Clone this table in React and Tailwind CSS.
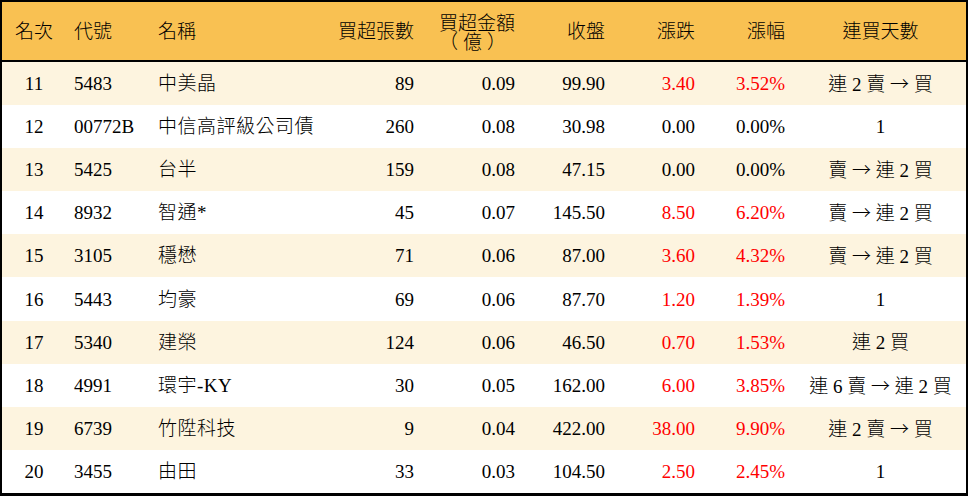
import React from 'react';

const ROWS = [
  { rank: 11, code: '5483', name: '中美晶', vol: 89, amt: '0.09', close: '99.90', chg: '3.40', pct: '3.52%', days: '連 2 賣 → 買' },
  { rank: 12, code: '00772B', name: '中信高評級公司債', vol: 260, amt: '0.08', close: '30.98', chg: '0.00', pct: '0.00%', days: '1' },
  { rank: 13, code: '5425', name: '台半', vol: 159, amt: '0.08', close: '47.15', chg: '0.00', pct: '0.00%', days: '賣 → 連 2 買' },
  { rank: 14, code: '8932', name: '智通*', vol: 45, amt: '0.07', close: '145.50', chg: '8.50', pct: '6.20%', days: '賣 → 連 2 買' },
  { rank: 15, code: '3105', name: '穩懋', vol: 71, amt: '0.06', close: '87.00', chg: '3.60', pct: '4.32%', days: '賣 → 連 2 買' },
  { rank: 16, code: '5443', name: '均豪', vol: 69, amt: '0.06', close: '87.70', chg: '1.20', pct: '1.39%', days: '1' },
  { rank: 17, code: '5340', name: '建榮', vol: 124, amt: '0.06', close: '46.50', chg: '0.70', pct: '1.53%', days: '連 2 買' },
  { rank: 18, code: '4991', name: '環宇-KY', vol: 30, amt: '0.05', close: '162.00', chg: '6.00', pct: '3.85%', days: '連 6 賣 → 連 2 買' },
  { rank: 19, code: '6739', name: '竹陞科技', vol: 9, amt: '0.04', close: '422.00', chg: '38.00', pct: '9.90%', days: '連 2 賣 → 買' },
  { rank: 20, code: '3455', name: '由田', vol: 33, amt: '0.03', close: '104.50', chg: '2.50', pct: '2.45%', days: '1' },
];

// red when the stock moved up, plain black when flat
const moveColor = (v) => (parseFloat(v) > 0 ? 'text-[#ff0000]' : 'text-black');

const COLS = 'grid grid-cols-[64px_84px_186px_88px_101px_90px_90px_90px_171px]';

// the arrow is drawn from the CJK font so it is as wide as in the original
const Days = ({ text }) => {
  const parts = text.split('→');
  return (
    <>
      {parts.map((p, i) => (
        <React.Fragment key={i}>
          {i > 0 && <span style={{ fontFamily: '"Noto Sans CJK TC", sans-serif' }}>→</span>}
          {p}
        </React.Fragment>
      ))}
    </>
  );
};

export default function App() {
  return (
    <div
      className="w-[968px] h-[496px] bg-white text-black text-[19px] leading-none font-light"
      style={{ fontFamily: '"Liberation Serif", "Noto Sans CJK TC", serif' }}
    >
      <div className="h-full border-black border-t-2 border-x-2 border-b-[3px] flex flex-col">
        {/* HEADER */}
        <div className={`${COLS} h-[60px] items-center bg-[#f9c152] border-b-2 border-black`}>
          <div className="text-center">名次</div>
          <div className="pl-[8px]">代號</div>
          <div className="pl-[8px]">名稱</div>
          <div className="text-right pr-[10px]">買超張數</div>
          <div className="text-right pr-[10px] leading-[19px] pt-[3px]">
            <div>買超金額</div>
            <div className="pr-[4px] tracking-[5px]">（億）</div>
          </div>
          <div className="text-right pr-[10px]">收盤</div>
          <div className="text-right pr-[10px]">漲跌</div>
          <div className="text-right pr-[10px]">漲幅</div>
          <div className="text-center">連買天數</div>
        </div>

        {/* ROWS */}
        {ROWS.map((r, i) => (
          <div
            key={r.rank}
            className={`${COLS} flex-1 items-center ${i % 2 === 0 ? 'bg-[#fdf4df]' : 'bg-white'}`}
          >
            <div className="text-center">{r.rank}</div>
            <div className="pl-[8px]">{r.code}</div>
            <div className="pl-[8px] whitespace-nowrap tracking-[0.5px]">{r.name}</div>
            <div className="text-right pr-[10px]">{r.vol}</div>
            <div className="text-right pr-[10px]">{r.amt}</div>
            <div className="text-right pr-[10px]">{r.close}</div>
            <div className={`text-right pr-[10px] ${moveColor(r.chg)}`}>{r.chg}</div>
            <div className={`text-right pr-[10px] ${moveColor(r.chg)}`}>{r.pct}</div>
            <div className="text-center whitespace-nowrap"><Days text={r.days} /></div>
          </div>
        ))}
      </div>
    </div>
  );
}
